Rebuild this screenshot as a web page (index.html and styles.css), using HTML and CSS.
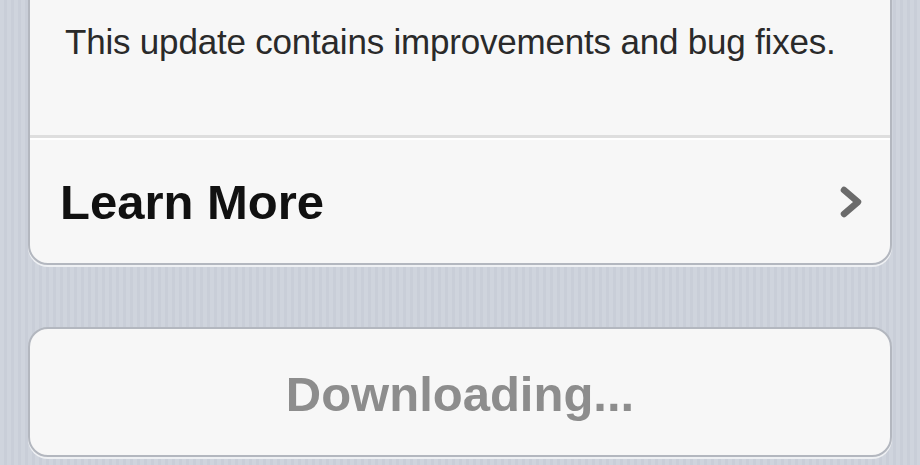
FILE: index.html
```html
<!DOCTYPE html>
<html lang="en">

<head>
    <meta charset="UTF-8">
    <meta name="viewport" content="width=device-width, initial-scale=1.0">
    <title>Software Update</title>
    <link rel="stylesheet" href="styles.css">
</head>

<body>
    <main class="settings">
        <!-- Update details group -->
        <div class="group group-top">
            <div class="cell cell-notes">
                <p>This update contains improvements and bug fixes.</p>
            </div>
            <div class="cell cell-link">
                <span class="label">Learn More</span>
                <svg class="chevron" width="28" height="36" viewBox="0 0 28 36">
                    <path d="M7 6 L21 18 L7 30" fill="none" stroke="#6b6b6b" stroke-width="6.5" stroke-linecap="round" stroke-linejoin="round"/>
                </svg>
            </div>
        </div>

        <!-- Download status -->
        <div class="group">
            <div class="cell cell-status">Downloading...</div>
        </div>
    </main>
</body>

</html>
```

FILE: styles.css
```css
body {
    margin: 0;
    padding: 0;
    font-family: "Liberation Sans", Arial, sans-serif;
    background-color: #cdd2db;
    background-image: repeating-linear-gradient(90deg, #cfd4dd 0, #cfd4dd 4px, #c9ced8 4px, #c9ced8 7px);
    height: 465px;
    overflow: hidden;
}

.settings {
    padding: 0 28px;
}

.group {
    background-color: #f7f7f7;
    border: 2px solid #b3b7bf;
    border-radius: 20px;
    box-shadow: 0 2px 0 #eef0f3;
    overflow: hidden;
}

/* the first group continues above the visible area */
.group-top {
    margin-top: -30px;
    margin-bottom: 62px;
}

.cell {
    box-sizing: border-box;
}

.cell-notes {
    height: 166px;
    padding: 50px 0 0 35px;
    border-bottom: 3px solid #dedede;
}

.cell-notes p {
    margin: 0;
    font-size: 35px;
    color: #2a2a2a;
    letter-spacing: -0.2px;
}

.cell-link {
    height: 125px;
    border-top: 2px solid #ffffff;
    display: flex;
    align-items: center;
    justify-content: space-between;
    padding: 0 25px 0 30px;
}

.label {
    font-size: 49px;
    font-weight: bold;
    color: #111;
}

.chevron {
    display: block;
}

.cell-status {
    height: 126px;
    display: flex;
    align-items: center;
    justify-content: center;
    padding-top: 4px;
    font-size: 49px;
    font-weight: bold;
    color: #8d8d8d;
}
```
